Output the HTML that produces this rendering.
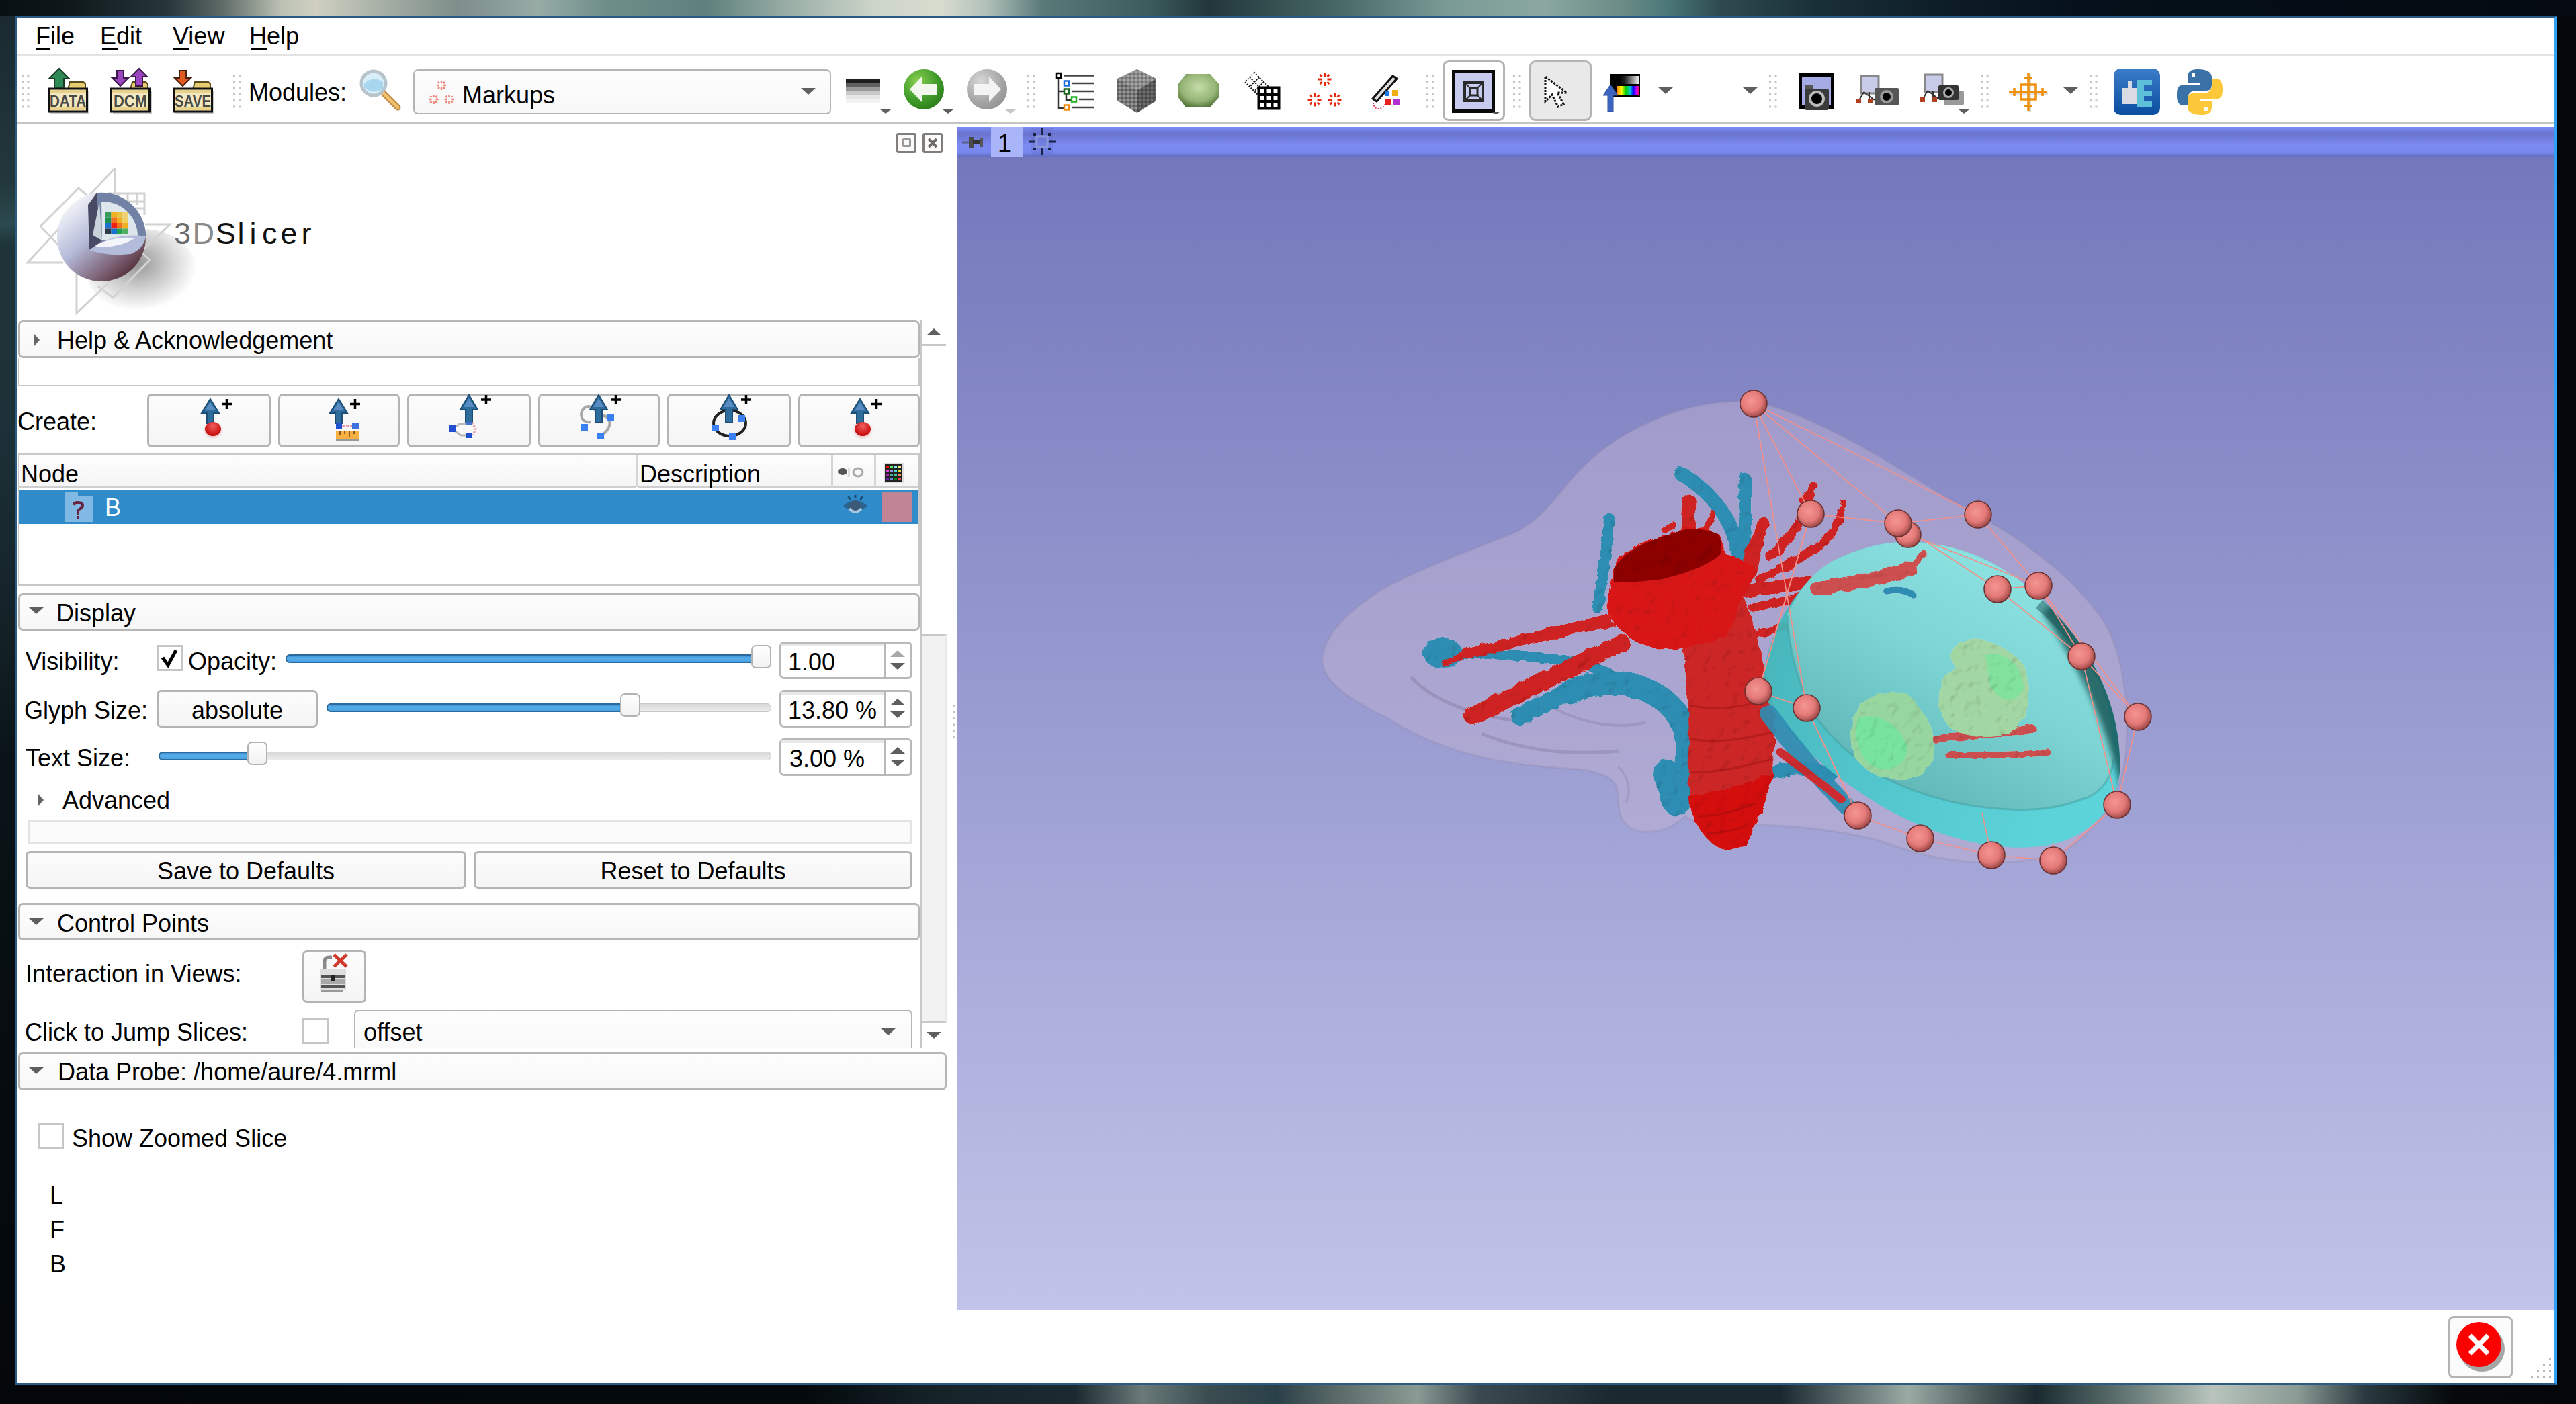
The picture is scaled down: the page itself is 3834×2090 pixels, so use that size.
<!DOCTYPE html>
<html><head><meta charset="utf-8">
<style>
html,body{margin:0;padding:0;width:3834px;height:2090px;overflow:hidden;background:#03070b;}
*{box-sizing:border-box;}
.a{position:absolute;}
.t{position:absolute;font-family:"Liberation Sans",sans-serif;font-size:36px;line-height:36px;white-space:pre;color:#000;}
.box{position:absolute;border:3px solid #b6b6b6;border-radius:7px;background:linear-gradient(#fdfdfd,#f7f7f7);}
.btn{position:absolute;border:3px solid #b4b4b4;border-radius:7px;background:linear-gradient(#fcfcfc,#f5f5f5);}
.grip{position:absolute;width:14px;height:50px;background-image:radial-gradient(circle,#c4c4c4 1.6px,transparent 1.8px);background-size:9.5px 9.5px;}
.tri-r{position:absolute;width:0;height:0;border-top:10px solid transparent;border-bottom:10px solid transparent;border-left:9px solid #666;}
.tri-d{position:absolute;width:0;height:0;border-left:11px solid transparent;border-right:11px solid transparent;border-top:10px solid #5f5f5f;}
.tri-u{position:absolute;width:0;height:0;border-left:11px solid transparent;border-right:11px solid transparent;border-bottom:10px solid #5f5f5f;}
.cb{position:absolute;border:3px solid #c6c6c6;background:#fff;width:39px;height:39px;}
.groove{position:absolute;height:13px;border-radius:6px;background:linear-gradient(#d8d8d8,#ececec);border:1px solid #c8c8c8;}
.fill{position:absolute;height:13px;border-radius:6px;background:linear-gradient(#3f8fcc,#56adea 40%,#4aa2e0);border:2px solid #2a6a9e;}
.handle{position:absolute;width:30px;height:35px;border:2px solid #b3b3b3;border-radius:7px;background:linear-gradient(#ffffff,#f2f2f2);}
.spin{position:absolute;border:3px solid #b8b8b8;border-radius:7px;background:#fff;}
</style></head>
<body>
<!-- desktop background strips -->
<div class="a" style="left:0;top:0;width:3834px;height:24px;background:linear-gradient(90deg,#071012 0px,#0d1618 90px,#26363a 250px,#5e6a66 330px,#bcc2b4 420px,#cfd0c2 470px,#aab2a8 560px,#7e8e8a 680px,#8a9c98 745px,#98aca6 800px,#6e8e8a 900px,#5e807c 1050px,#9cb0a8 1180px,#ccd4c8 1300px,#d8dccf 1400px,#b0c0b8 1470px,#5a7a7a 1550px,#3a5a5c 1715px,#22363c 1800px,#3a5656 1920px,#4a6a6a 2000px,#7a9a96 2150px,#8aa8a0 2300px,#6a8a86 2420px,#4a7878 2480px,#2e4a50 2560px,#1a3038 2700px,#0e1e26 2880px,#05101a 3100px,#040a10 3834px);"></div>
<div class="a" style="left:0;top:2061px;width:3834px;height:29px;background:linear-gradient(90deg,#03070b 0px,#04090d 1200px,#16242a 1400px,#1a2a30 1600px,#6a7a7a 1700px,#3a4c50 1800px,#2a4048 1900px,#5a6a68 1990px,#8a9a94 2110px,#3a4a50 2200px,#1a2830 2400px,#1a2830 2650px,#9aaaa4 2840px,#4a5a5a 2950px,#1a2a30 3030px,#5a6e6c 3150px,#b8c4bc 3293px,#8a9a94 3420px,#2a3a40 3520px,#05090c 3650px,#03070b 3834px);"></div>
<div class="a" style="left:0;top:24px;width:23px;height:2037px;background:linear-gradient(#1a2a30 0px,#22383c 250px,#2c4a4e 310px,#1e3438 340px,#1c3238 600px,#142228 900px,#0a1418 1100px,#060b0f 1600px,#04080b 2037px);"></div>
<!-- window -->
<div class="a" style="left:23px;top:24px;width:3782px;height:2037px;border:3px solid #2b5b84;border-right-color:#2fa0f5;background:#fff;"></div>

<!-- menu -->
<div class="a" style="left:26px;top:80px;width:3775px;height:3px;background:#e4e4e4;"></div>
<div class="t" style="left:53px;top:36px;">File</div>
<div class="a" style="left:53px;top:71px;width:21px;height:3px;background:#000;"></div>
<div class="t" style="left:149px;top:36px;">Edit</div>
<div class="a" style="left:152px;top:71px;width:24px;height:3px;background:#000;"></div>
<div class="t" style="left:257px;top:36px;">View</div>
<div class="a" style="left:257px;top:71px;width:24px;height:3px;background:#000;"></div>
<div class="t" style="left:371px;top:36px;">Help</div>
<div class="a" style="left:374px;top:71px;width:24px;height:3px;background:#000;"></div>

<!-- toolbar -->
<div class="a" style="left:26px;top:182px;width:3775px;height:3px;background:#c4c4c4;"></div>
<div id="toolbar">
<svg class="a" style="left:32px;top:111px" width="12" height="50" fill="#c4c4c4"><rect x="0" y="0.0" width="3" height="3"/><rect x="8.5" y="0.0" width="3" height="3"/><rect x="0" y="9.3" width="3" height="3"/><rect x="8.5" y="9.3" width="3" height="3"/><rect x="0" y="18.6" width="3" height="3"/><rect x="8.5" y="18.6" width="3" height="3"/><rect x="0" y="27.9" width="3" height="3"/><rect x="8.5" y="27.9" width="3" height="3"/><rect x="0" y="37.2" width="3" height="3"/><rect x="8.5" y="37.2" width="3" height="3"/><rect x="0" y="46.5" width="3" height="3"/><rect x="8.5" y="46.5" width="3" height="3"/></svg>
<svg class="a" style="left:347px;top:111px" width="12" height="50" fill="#c4c4c4"><rect x="0" y="0.0" width="3" height="3"/><rect x="8.5" y="0.0" width="3" height="3"/><rect x="0" y="9.3" width="3" height="3"/><rect x="8.5" y="9.3" width="3" height="3"/><rect x="0" y="18.6" width="3" height="3"/><rect x="8.5" y="18.6" width="3" height="3"/><rect x="0" y="27.9" width="3" height="3"/><rect x="8.5" y="27.9" width="3" height="3"/><rect x="0" y="37.2" width="3" height="3"/><rect x="8.5" y="37.2" width="3" height="3"/><rect x="0" y="46.5" width="3" height="3"/><rect x="8.5" y="46.5" width="3" height="3"/></svg>
<svg class="a" style="left:1529px;top:111px" width="12" height="50" fill="#c4c4c4"><rect x="0" y="0.0" width="3" height="3"/><rect x="8.5" y="0.0" width="3" height="3"/><rect x="0" y="9.3" width="3" height="3"/><rect x="8.5" y="9.3" width="3" height="3"/><rect x="0" y="18.6" width="3" height="3"/><rect x="8.5" y="18.6" width="3" height="3"/><rect x="0" y="27.9" width="3" height="3"/><rect x="8.5" y="27.9" width="3" height="3"/><rect x="0" y="37.2" width="3" height="3"/><rect x="8.5" y="37.2" width="3" height="3"/><rect x="0" y="46.5" width="3" height="3"/><rect x="8.5" y="46.5" width="3" height="3"/></svg>
<svg class="a" style="left:2123px;top:111px" width="12" height="50" fill="#c4c4c4"><rect x="0" y="0.0" width="3" height="3"/><rect x="8.5" y="0.0" width="3" height="3"/><rect x="0" y="9.3" width="3" height="3"/><rect x="8.5" y="9.3" width="3" height="3"/><rect x="0" y="18.6" width="3" height="3"/><rect x="8.5" y="18.6" width="3" height="3"/><rect x="0" y="27.9" width="3" height="3"/><rect x="8.5" y="27.9" width="3" height="3"/><rect x="0" y="37.2" width="3" height="3"/><rect x="8.5" y="37.2" width="3" height="3"/><rect x="0" y="46.5" width="3" height="3"/><rect x="8.5" y="46.5" width="3" height="3"/></svg>
<svg class="a" style="left:2252px;top:111px" width="12" height="50" fill="#c4c4c4"><rect x="0" y="0.0" width="3" height="3"/><rect x="8.5" y="0.0" width="3" height="3"/><rect x="0" y="9.3" width="3" height="3"/><rect x="8.5" y="9.3" width="3" height="3"/><rect x="0" y="18.6" width="3" height="3"/><rect x="8.5" y="18.6" width="3" height="3"/><rect x="0" y="27.9" width="3" height="3"/><rect x="8.5" y="27.9" width="3" height="3"/><rect x="0" y="37.2" width="3" height="3"/><rect x="8.5" y="37.2" width="3" height="3"/><rect x="0" y="46.5" width="3" height="3"/><rect x="8.5" y="46.5" width="3" height="3"/></svg>
<svg class="a" style="left:2633px;top:111px" width="12" height="50" fill="#c4c4c4"><rect x="0" y="0.0" width="3" height="3"/><rect x="8.5" y="0.0" width="3" height="3"/><rect x="0" y="9.3" width="3" height="3"/><rect x="8.5" y="9.3" width="3" height="3"/><rect x="0" y="18.6" width="3" height="3"/><rect x="8.5" y="18.6" width="3" height="3"/><rect x="0" y="27.9" width="3" height="3"/><rect x="8.5" y="27.9" width="3" height="3"/><rect x="0" y="37.2" width="3" height="3"/><rect x="8.5" y="37.2" width="3" height="3"/><rect x="0" y="46.5" width="3" height="3"/><rect x="8.5" y="46.5" width="3" height="3"/></svg>
<svg class="a" style="left:2948px;top:111px" width="12" height="50" fill="#c4c4c4"><rect x="0" y="0.0" width="3" height="3"/><rect x="8.5" y="0.0" width="3" height="3"/><rect x="0" y="9.3" width="3" height="3"/><rect x="8.5" y="9.3" width="3" height="3"/><rect x="0" y="18.6" width="3" height="3"/><rect x="8.5" y="18.6" width="3" height="3"/><rect x="0" y="27.9" width="3" height="3"/><rect x="8.5" y="27.9" width="3" height="3"/><rect x="0" y="37.2" width="3" height="3"/><rect x="8.5" y="37.2" width="3" height="3"/><rect x="0" y="46.5" width="3" height="3"/><rect x="8.5" y="46.5" width="3" height="3"/></svg>
<svg class="a" style="left:3110px;top:111px" width="12" height="50" fill="#c4c4c4"><rect x="0" y="0.0" width="3" height="3"/><rect x="8.5" y="0.0" width="3" height="3"/><rect x="0" y="9.3" width="3" height="3"/><rect x="8.5" y="9.3" width="3" height="3"/><rect x="0" y="18.6" width="3" height="3"/><rect x="8.5" y="18.6" width="3" height="3"/><rect x="0" y="27.9" width="3" height="3"/><rect x="8.5" y="27.9" width="3" height="3"/><rect x="0" y="37.2" width="3" height="3"/><rect x="8.5" y="37.2" width="3" height="3"/><rect x="0" y="46.5" width="3" height="3"/><rect x="8.5" y="46.5" width="3" height="3"/></svg>
<!-- DATA -->
<svg class="a" style="left:66px;top:98px" width="80" height="78" viewBox="0 0 80 78">
 <rect x="9" y="37" width="58" height="35" fill="#999" opacity=".5"/>
 <path d="M38 24 h20 l3 3 v8 h-26z" fill="#e8cc70" stroke="#5a4a20" stroke-width="2"/>
 <rect x="6.5" y="34" width="57" height="34" fill="#f3e8c0" stroke="#111" stroke-width="3"/>
 <rect x="8" y="36" width="54" height="4" fill="#e7d08a"/>
 <rect x="8" y="61" width="54" height="5" fill="#e9d28a"/>
 <text x="35" y="61" font-family="Liberation Sans" font-size="24" font-weight="bold" fill="#4a4a44" text-anchor="middle" textLength="54" lengthAdjust="spacingAndGlyphs">DATA</text>
 <path d="M22 4 l15 15 h-8 v13 h-14 v-13 h-8z" fill="#2e8a55" stroke="#1a3a28" stroke-width="2"/>
</svg>
<!-- DCM -->
<svg class="a" style="left:159px;top:98px" width="80" height="78" viewBox="0 0 80 78">
 <rect x="9" y="37" width="58" height="35" fill="#999" opacity=".5"/>
 <path d="M38 24 h20 l3 3 v8 h-26z" fill="#e8cc70" stroke="#5a4a20" stroke-width="2"/>
 <rect x="6.5" y="34" width="57" height="34" fill="#f3e8c0" stroke="#111" stroke-width="3"/>
 <rect x="8" y="36" width="54" height="4" fill="#e7d08a"/>
 <rect x="8" y="61" width="54" height="5" fill="#e9d28a"/>
 <text x="35" y="61" font-family="Liberation Sans" font-size="24" font-weight="bold" fill="#4a4a44" text-anchor="middle" textLength="50" lengthAdjust="spacingAndGlyphs">DCM</text>
 <path d="M15 7 h10 v11 h7 l-12 12 l-12 -12 h7z" fill="#9b45c0" stroke="#3a1a48" stroke-width="2"/>
 <path d="M48 4 l12 12 h-7 v14 h-10 v-14 h-7z" fill="#9b45c0" stroke="#3a1a48" stroke-width="2"/>
</svg>
<!-- SAVE -->
<svg class="a" style="left:252px;top:98px" width="80" height="78" viewBox="0 0 80 78">
 <rect x="9" y="37" width="58" height="35" fill="#999" opacity=".5"/>
 <path d="M38 24 h20 l3 3 v8 h-26z" fill="#e8cc70" stroke="#5a4a20" stroke-width="2"/>
 <rect x="6.5" y="34" width="57" height="34" fill="#f3e8c0" stroke="#111" stroke-width="3"/>
 <rect x="8" y="36" width="54" height="4" fill="#e7d08a"/>
 <rect x="8" y="61" width="54" height="5" fill="#e9d28a"/>
 <text x="35" y="61" font-family="Liberation Sans" font-size="24" font-weight="bold" fill="#4a4a44" text-anchor="middle" textLength="54" lengthAdjust="spacingAndGlyphs">SAVE</text>
 <path d="M15 7 h10 v11 h7 l-12 12 l-12 -12 h7z" fill="#e05a20" stroke="#4a2010" stroke-width="2"/>
</svg>
<div class="t" style="left:370px;top:120px;">Modules:</div>
<!-- magnifier -->
<svg class="a" style="left:534px;top:102px" width="64" height="64" viewBox="0 0 64 64">
 <path d="M36 36 L58 58" stroke="#c08a40" stroke-width="9" stroke-linecap="round"/>
 <path d="M36 36 L58 58" stroke="#f0c070" stroke-width="5" stroke-linecap="round"/>
 <circle cx="22" cy="22" r="18" fill="#d8eef8" stroke="#b8c4cc" stroke-width="5"/>
 <path d="M8 22 Q22 10 36 20 L36 30 Q22 40 8 28z" fill="#a8d6ee"/>
</svg>
<!-- module combo -->
<div class="a" style="left:615px;top:103px;width:622px;height:67px;border:2px solid #b5b5b5;border-radius:7px;background:linear-gradient(#fdfdfd,#f8f8f8);"></div>
<svg class="a" style="left:634px;top:116px" width="48" height="44" viewBox="634 116 48 44"><g stroke="#ec6a5a" stroke-width="2.5" fill="none" opacity=".85"><path d="M657 120v4 M657 130v4 M650 127h4 M660 127h4 M652 122l2 2 M662 122l-2 2 M652 132l2 -2 M662 132l-2 -2"/><path d="M645.5 141v4 M645.5 151v4 M638.5 148h4 M648.5 148h4 M640.5 143l2 2 M650.5 143l-2 2 M640.5 153l2 -2 M650.5 153l-2 -2"/><path d="M668.5 141v4 M668.5 151v4 M661.5 148h4 M671.5 148h4 M663.5 143l2 2 M673.5 143l-2 2 M663.5 153l2 -2 M673.5 153l-2 -2"/></g></svg>
<div class="t" style="left:688px;top:124px;">Markups</div>
<div class="tri-d" style="left:1192px;top:131px;"></div>
<!-- window level -->
<div class="a" style="left:1259px;top:117px;width:51px;height:36px;background:linear-gradient(#1e1e1e 0,#1e1e1e 6px,#606060 6px,#606060 12px,#9a9a9a 12px,#9a9a9a 18px,#c8c8c8 18px,#c8c8c8 24px,#e6e6e6 24px,#e6e6e6 30px,#f3f3f3 30px);"></div>
<div class="a" style="left:1310px;top:163px;width:0;height:0;border-left:8px solid transparent;border-right:8px solid transparent;border-top:6px solid #5f5f5f;"></div>
<!-- back -->
<svg class="a" style="left:1344px;top:100px" width="64" height="66" viewBox="0 0 64 66">
 <defs><radialGradient id="gb" cx=".35" cy=".3" r=".8"><stop offset="0" stop-color="#8ad050"/><stop offset=".6" stop-color="#3f9a2a"/><stop offset="1" stop-color="#2a7a1a"/></radialGradient>
 <radialGradient id="gf" cx=".35" cy=".3" r=".8"><stop offset="0" stop-color="#d8d8d8"/><stop offset=".6" stop-color="#a8a8a8"/><stop offset="1" stop-color="#909090"/></radialGradient></defs>
 <circle cx="31" cy="33" r="30" fill="url(#gb)"/>
 <path d="M10 33 L28 14 V25 H50 V41 H28 V52z" fill="#f2f8ee"/>
</svg>
<div class="a" style="left:1403px;top:163px;width:0;height:0;border-left:8px solid transparent;border-right:8px solid transparent;border-top:6px solid #5f5f5f;"></div>
<svg class="a" style="left:1438px;top:100px" width="64" height="66" viewBox="0 0 64 66">
 <circle cx="31" cy="33" r="30" fill="url(#gf)"/>
 <path d="M52 33 L34 14 V25 H12 V41 H34 V52z" fill="#f4f4f4"/>
</svg>
<div class="a" style="left:1496px;top:163px;width:0;height:0;border-left:8px solid transparent;border-right:8px solid transparent;border-top:6px solid #c8c8c8;"></div>
<!-- tree -->
<svg class="a" style="left:1570px;top:107px" width="60" height="60" viewBox="0 0 60 60">
 <g stroke="#333" stroke-width="2.5" fill="none">
 <path d="M5 9 V54 H13 M5 29 H13 M17 33 V42 H24"/>
 </g>
 <g stroke="#444" stroke-width="2.5"><path d="M13 5.5 H58 M25 17 H58 M25 29 H58 M36 41 H58 M25 53 H58"/></g>
 <rect x="2" y="2" width="7" height="7" fill="#fff" stroke="#000" stroke-width="2.5"/>
 <rect x="14" y="13.5" width="7" height="7" fill="#fff" stroke="#1a6ee0" stroke-width="2.5"/>
 <rect x="14" y="25.5" width="7" height="7" fill="#fff" stroke="#1a6a1a" stroke-width="2.5"/>
 <rect x="25" y="37.5" width="7" height="7" fill="#fff" stroke="#22b022" stroke-width="2.5"/>
 <rect x="14" y="49.5" width="7" height="7" fill="#fff" stroke="#f08a10" stroke-width="2.5"/>
</svg>
<!-- cube -->
<svg class="a" style="left:1659px;top:100px" width="66" height="72" viewBox="0 0 66 72">
 <defs><pattern id="noise" width="6" height="6" patternUnits="userSpaceOnUse"><rect width="6" height="6" fill="#777"/><rect width="3" height="3" fill="#999"/><rect x="3" y="3" width="3" height="3" fill="#5a5a5a"/></pattern></defs>
 <path d="M33 3 L62 17 V50 L33 68 L4 50 V17z" fill="url(#noise)"/>
 <path d="M33 35 L62 17 V50 L33 68z" fill="#222" opacity=".35"/>
 <path d="M33 3 L62 17 L33 35 L4 17z" fill="#fff" opacity=".15"/>
</svg>
<!-- green blob -->
<svg class="a" style="left:1751px;top:106px" width="66" height="58" viewBox="0 0 66 58">
 <defs><radialGradient id="gg" cx=".5" cy=".4" r=".6"><stop offset="0" stop-color="#c6dcaa"/><stop offset=".7" stop-color="#94b474"/><stop offset="1" stop-color="#5a7a40"/></radialGradient></defs>
 <path d="M14 4 H50 L64 20 V38 L50 54 H14 L2 38 V20z" fill="url(#gg)"/>
</svg>
<!-- grid -->
<svg class="a" style="left:1851px;top:106px" width="56" height="58" viewBox="0 0 56 58">
 <g fill="none" stroke="#111" stroke-width="2" stroke-dasharray="2 2">
 <path d="M16 2 L2 16 L28 42 L42 28z M9 9 L35 35 M23 9 L9 23 M30 16 L16 30 M37 23 L23 37"/>
 </g>
 <rect x="22.5" y="24.5" width="30" height="31" fill="#fff" stroke="#000" stroke-width="4"/>
 <path d="M32.5 25v30 M42.5 25v30 M23 35h30 M23 45h30" stroke="#000" stroke-width="4"/>
</svg>
<!-- markups stars -->
<svg class="a" style="left:1940px;top:105px" width="64" height="60" viewBox="1940 105 64 60"><g stroke="#e52a10" stroke-width="3" fill="none"><path d="M1971.5 108v6 M1971.5 122v6 M1961.5 118h6 M1975.5 118h6 M1964.5 111l3 3 M1978.5 111l-3 3 M1964.5 125l3 -3 M1978.5 125l-3 -3"/><path d="M1956.5 138.5v6 M1956.5 152.5v6 M1946.5 148.5h6 M1960.5 148.5h6 M1949.5 141.5l3 3 M1963.5 141.5l-3 3 M1949.5 155.5l3 -3 M1963.5 155.5l-3 -3"/><path d="M1986.5 138.5v6 M1986.5 152.5v6 M1976.5 148.5h6 M1990.5 148.5h6 M1979.5 141.5l3 3 M1993.5 141.5l-3 3 M1979.5 155.5l3 -3 M1993.5 155.5l-3 -3"/></g></svg>
<!-- paint -->
<svg class="a" style="left:2039px;top:109px" width="52" height="56" viewBox="0 0 52 56">
 <path d="M4 38 L34 4 L40 8 L10 42z" fill="#ddd" stroke="#111" stroke-width="3"/>
 <path d="M5 44 Q6 56 18 52 Q22 48 24 44" fill="none" stroke="#e04060" stroke-width="2" stroke-dasharray="2 2"/>
 <rect x="22" y="27" width="7" height="7" fill="#1a78e0"/><rect x="33" y="25" width="9" height="9" fill="#f0b010"/>
 <rect x="23" y="38" width="9" height="9" fill="#e82020"/><rect x="35" y="38" width="9" height="9" fill="#b030d0"/>
</svg>
<!-- layout button -->
<div class="btn" style="left:2147px;top:90px;width:93px;height:90px;border-width:3px;border-radius:9px;background:#fff;"></div>
<svg class="a" style="left:2161px;top:104px" width="76" height="66" viewBox="0 0 76 66">
 <rect x="2.5" y="2.5" width="59" height="59" fill="#c8cbf0" stroke="#0a0a0a" stroke-width="5"/>
 <rect x="19" y="19" width="27" height="27" fill="#c8cbf0" stroke="#2a2a2a" stroke-width="4"/>
 <rect x="27" y="27" width="11" height="11" fill="#c8cbf0" stroke="#2a2a2a" stroke-width="3"/>
 <path d="M21 21l6 6M44 21l-6 6M21 44l6-6M44 44l-6-6" stroke="#2a2a2a" stroke-width="2"/>
 <path d="M60 62 h12 l-8 6z" fill="#555"/>
</svg>
<!-- arrow button -->
<div class="btn" style="left:2276px;top:90px;width:93px;height:90px;border-width:3px;border-radius:9px;background:#e9e9e9;"></div>
<svg class="a" style="left:2297px;top:111px" width="50" height="52" viewBox="0 0 50 52">
 <path d="M3 3 L3 40 L13 30 L22 48 L30 44 L21 27 L35 27z" fill="#fff" stroke="#111" stroke-width="3" stroke-dasharray="3 2"/>
</svg>
<!-- colour -->
<svg class="a" style="left:2385px;top:108px" width="60" height="60" viewBox="0 0 60 60">
 <defs><linearGradient id="gray" x1="0" x2="1"><stop offset="0" stop-color="#000"/><stop offset=".3" stop-color="#222"/><stop offset="1" stop-color="#eee"/></linearGradient>
 <linearGradient id="rainbow" x1="0" x2="1"><stop offset="0" stop-color="#f80"/><stop offset=".2" stop-color="#ff0"/><stop offset=".4" stop-color="#0c0"/><stop offset=".6" stop-color="#0cc"/><stop offset=".75" stop-color="#00f"/><stop offset=".9" stop-color="#c0f"/><stop offset="1" stop-color="#f06"/></linearGradient></defs>
 <rect x="11" y="2" width="45" height="34" fill="#000"/>
 <rect x="25" y="5" width="29" height="12" fill="url(#gray)"/>
 <rect x="22" y="20" width="32" height="13" fill="url(#rainbow)"/>
 <path d="M12 18 L23 34 H16 V58 H8 V34 H1z" fill="#3a64c0" stroke="#2a4a90" stroke-width="1"/>
</svg>
<div class="tri-d" style="left:2468px;top:130px;"></div>
<div class="tri-d" style="left:2594px;top:130px;"></div>
<!-- cameras -->
<svg class="a" style="left:2676px;top:108px" width="56" height="60" viewBox="0 0 56 60">
 <rect x="3.5" y="3.5" width="48" height="48" fill="#a6abe6" stroke="#000" stroke-width="5"/>
 <rect x="10" y="19" width="12" height="7" fill="#555"/>
 <rect x="10" y="24" width="36" height="32" rx="3" fill="#3a3a3a"/>
 <circle cx="28" cy="39" r="12" fill="#bbb"/><circle cx="28" cy="39" r="8" fill="#000"/>
</svg>
<svg class="a" style="left:2760px;top:111px" width="68" height="50" viewBox="0 0 68 50">
 <rect x="10" y="2" width="26" height="26" fill="#c8cce8" stroke="#888" stroke-width="3"/>
 <path d="M14 26 L6 40 M22 26 L22 38 M14 26 L30 38" stroke="#333" stroke-width="2"/>
 <rect x="2" y="36" width="8" height="7" fill="#b04020"/><rect x="20" y="36" width="8" height="7" fill="#b04020"/>
 <rect x="30" y="20" width="36" height="26" rx="2" fill="#555"/>
 <circle cx="48" cy="33" r="10" fill="#999"/><circle cx="48" cy="33" r="6" fill="#000"/>
</svg>
<svg class="a" style="left:2855px;top:109px" width="70" height="50" viewBox="0 0 70 50">
 <rect x="10" y="2" width="26" height="26" fill="#c8cce8" stroke="#888" stroke-width="3"/>
 <path d="M14 26 L6 40 M22 26 L22 38 M14 26 L30 38" stroke="#333" stroke-width="2"/>
 <rect x="2" y="36" width="8" height="7" fill="#b04020"/><rect x="20" y="36" width="8" height="7" fill="#b04020"/>
 <rect x="38" y="26" width="30" height="22" rx="3" fill="#999"/>
 <rect x="30" y="18" width="30" height="22" rx="2" fill="#333"/>
 <circle cx="45" cy="29" r="8" fill="#aaa"/><circle cx="45" cy="29" r="5" fill="#000"/>
</svg>
<div class="a" style="left:2915px;top:163px;width:0;height:0;border-left:8px solid transparent;border-right:8px solid transparent;border-top:6px solid #5f5f5f;"></div>
<!-- crosshair -->
<svg class="a" style="left:2988px;top:106px" width="62" height="62" viewBox="0 0 62 62">
 <g stroke="#000" opacity=".12" stroke-width="4"><path d="M33 4V60M4 33H60"/></g>
 <g stroke="#f0900a" stroke-width="3.5" fill="none">
 <path d="M31 2V59 M2 31H59 M25 10h12 M25 52h12 M10 25v12 M52 25v12"/>
 <rect x="20" y="20" width="22" height="22"/>
 </g>
</svg>
<div class="tri-d" style="left:3071px;top:130px;"></div>
<!-- extensions -->
<svg class="a" style="left:3145px;top:101px" width="72" height="72" viewBox="0 0 72 72">
 <defs><linearGradient id="ext" x1="0" y1="0" x2="0" y2="1"><stop offset="0" stop-color="#3c7cc8"/><stop offset="1" stop-color="#0a4ea0"/></linearGradient></defs>
 <rect x="1" y="1" width="69" height="69" rx="10" fill="url(#ext)"/>
 <path d="M14 30 h8 v-10 h6 v10 h8 v24 h-22z" fill="#d8dce2"/>
 <path d="M36 18 h22 v8 h-12 v8 h12 v8 h-12 v8 h12 v8 h-22z" fill="#5ec0d8"/>
</svg>
<!-- python -->
<svg class="a" style="left:3238px;top:101px" width="72" height="72" viewBox="0 0 72 72">
 <path d="M34 2 C20 2 18 8 18 14 V22 H36 V26 H10 C2 26 2 34 2 42 C2 52 6 56 12 56 H18 V46 C18 38 24 34 30 34 H46 C52 34 54 30 54 24 V14 C54 6 46 2 34 2z" fill="#3a72a8"/>
 <path d="M38 70 C52 70 54 64 54 58 V50 H36 V46 H62 C70 46 70 38 70 30 C70 20 66 16 60 16 H54 V26 C54 34 48 38 42 38 H26 C20 38 18 42 18 48 V58 C18 66 26 70 38 70z" fill="#fcc83a"/>
 <rect x="24" y="8" width="5" height="6" fill="#fff"/><rect x="43" y="58" width="5" height="6" fill="#fff"/>
</svg>
</div>

<!-- left panel -->
<div id="panel">
<!-- undock/close -->
<div class="a" style="left:1334px;top:198px;width:30px;height:30px;border:3px solid #807d7a;border-radius:3px;background:#fbfbfb;"></div>
<div class="a" style="left:1343px;top:206px;width:13px;height:13px;border:3px solid #9a9794;border-radius:2px;"></div>
<div class="a" style="left:1373px;top:198px;width:30px;height:30px;border:3px solid #807d7a;border-radius:3px;background:#fbfbfb;"></div>
<svg class="a" style="left:1373px;top:198px" width="30" height="30"><path d="M9 9 L21 21 M21 9 L9 21" stroke="#6e6b68" stroke-width="4"/></svg>

<!-- logo -->
<svg class="a" style="left:0;top:0" width="500" height="480" viewBox="0 0 500 480">
 <defs>
  <radialGradient id="lshadow" cx=".45" cy=".4" r=".55"><stop offset="0" stop-color="#000" stop-opacity=".42"/><stop offset=".5" stop-color="#000" stop-opacity=".2"/><stop offset="1" stop-color="#000" stop-opacity="0"/></radialGradient>
  <linearGradient id="sph" x1="0.1" y1="0.1" x2="0.9" y2="1"><stop offset="0" stop-color="#fafbfd"/><stop offset=".4" stop-color="#b4bad8"/><stop offset=".72" stop-color="#7e6478"/><stop offset="1" stop-color="#3c1418"/></linearGradient>
 </defs>
 <ellipse cx="212" cy="405" rx="82" ry="64" fill="url(#lshadow)"/>
 <g fill="none" stroke="#d2d2d2" stroke-width="3">
  <path d="M171 250 V289 M171 250 L41 391 H94"/>
  <path d="M114 309 V466 L253 334 H216"/>
  <path d="M60 337 L117 280 L140 300 M60 337 L90 368"/>
  <path d="M146 426 L168 443 L223 387 L205 370"/>
  <path d="M160 288 H215 V320 M176 288 V300 M190 288 V300 M204 288 V305 M176 300 H215 M190 310 H215"/>
 </g>
 <circle cx="151" cy="353" r="66" fill="url(#sph)"/>
 <path d="M144 287 A66 66 0 0 1 217 352 L150 360z" fill="#7282a6"/>
 <path d="M151 300 A52 52 0 0 1 205 352 L152 358z" fill="#dde6ea"/>
 <path d="M133 372 L131 305 L144 287 L150 360z" fill="#474a62"/>
 <path d="M138 350 L148 300 L152 358z" fill="#c9d4da"/>
 <g>
  <rect x="157" y="315" width="8.5" height="8.5" fill="#3a9a5a"/><rect x="165.5" y="315" width="8.5" height="8.5" fill="#f0b020"/><rect x="174" y="315" width="8.5" height="8.5" fill="#e8c040"/><rect x="182.5" y="315" width="8.5" height="8.5" fill="#f0d070"/>
  <rect x="157" y="323.5" width="8.5" height="8.5" fill="#209050"/><rect x="165.5" y="323.5" width="8.5" height="8.5" fill="#f07020"/><rect x="174" y="323.5" width="8.5" height="8.5" fill="#f0b020"/><rect x="182.5" y="323.5" width="8.5" height="8.5" fill="#f0d060"/>
  <rect x="157" y="332" width="8.5" height="8.5" fill="#2070d0"/><rect x="165.5" y="332" width="8.5" height="8.5" fill="#f02010"/><rect x="174" y="332" width="8.5" height="8.5" fill="#f07020"/><rect x="182.5" y="332" width="8.5" height="8.5" fill="#f0b020"/>
  <rect x="157" y="340.5" width="8.5" height="8.5" fill="#303a48"/><rect x="165.5" y="340.5" width="8.5" height="8.5" fill="#1a70d0"/><rect x="174" y="340.5" width="8.5" height="8.5" fill="#20a050"/><rect x="182.5" y="340.5" width="8.5" height="8.5" fill="#50b060"/>
 </g>
 <path d="M133 372 Q170 345 217 352 Q214 370 195 378 Q160 382 133 372z" fill="#b4bcdc"/>
 <path d="M142 365 Q175 350 200 355 Q180 368 145 368z" fill="#fff" opacity=".85"/>
 <text font-family="Liberation Sans" font-size="45" y="363" fill="#111"><tspan x="259" fill="#6c6c6c">3</tspan><tspan x="286.5" fill="#8a8a8a">D</tspan><tspan x="321" fill="#111">S</tspan><tspan x="353.5">l</tspan><tspan x="371.5">i</tspan><tspan x="390">c</tspan><tspan x="417.5">e</tspan><tspan x="448.5">r</tspan></text>
</svg>

<!-- Help & Ack -->
<div class="box" style="left:27px;top:477px;width:1342px;height:56px;"></div>
<div class="tri-r" style="left:50px;top:496px;"></div>
<div class="t" style="left:85px;top:489px;">Help &amp; Acknowledgement</div>
<div class="a" style="left:27px;top:533px;width:1342px;height:42px;border:2px solid #c6c6c6;border-top:none;"></div>

<!-- scrollbar -->
<div class="a" style="left:1370px;top:477px;width:2px;height:1083px;background:#c8c8c8;"></div>
<div class="tri-u" style="left:1379px;top:489px;"></div>
<div class="a" style="left:1370px;top:512px;width:38px;height:3px;background:#c8c8c8;"></div>
<div class="a" style="left:1372px;top:944px;width:37px;height:579px;background:#f2f2f2;border-top:3px solid #c8c8c8;border-bottom:3px solid #c8c8c8;border-right:3px solid #e9e9e9;"></div>
<div class="tri-d" style="left:1379px;top:1536px;"></div>

<!-- Create -->
<div class="t" style="left:26px;top:610px;">Create:</div>
<div class="btn" style="left:219px;top:586px;width:184px;height:80px;"></div>
<div class="btn" style="left:414px;top:586px;width:181px;height:80px;"></div>
<div class="btn" style="left:606px;top:586px;width:184px;height:80px;"></div>
<div class="btn" style="left:801px;top:586px;width:181px;height:80px;"></div>
<div class="btn" style="left:993px;top:586px;width:184px;height:80px;"></div>
<div class="btn" style="left:1188px;top:586px;width:181px;height:80px;"></div>
<svg class="a" style="left:297px;top:592px" width="50" height="40" viewBox="0 0 50 40">
 <path d="M16 2 L29 23 H21 V38 H11 V23 H3z" fill="#2e6c9c" stroke="#1c4f78" stroke-width="2"/>
 <path d="M16 7 L24 19 H8z" fill="#5a8cc4"/>
 <path d="M33 9.5 H48 M40.5 2 V17" stroke="#000" stroke-width="3.5"/>
</svg>
<div class="a" style="left:305px;top:628px;width:24px;height:21px;border-radius:50%;background:radial-gradient(circle at 50% 30%,#f06060,#d01818 60%,#b00a10);box-shadow:0 2px 4px rgba(200,0,0,.25);"></div>
<svg class="a" style="left:488px;top:592px" width="50" height="40" viewBox="0 0 50 40">
 <path d="M16 2 L29 23 H21 V38 H11 V23 H3z" fill="#2e6c9c" stroke="#1c4f78" stroke-width="2"/>
 <path d="M16 7 L24 19 H8z" fill="#5a8cc4"/>
 <path d="M33 9.5 H48 M40.5 2 V17" stroke="#000" stroke-width="3.5"/>
</svg>
<svg class="a" style="left:498px;top:628px" width="40" height="32" viewBox="0 0 40 32">
 <rect x="2" y="2" width="9" height="9" fill="#1e50d0"/><rect x="26" y="2" width="11" height="9" fill="#3a70e0"/>
 <path d="M11 6.5 H26" stroke="#e8a0a8" stroke-width="3" stroke-dasharray="4 2"/>
 <rect x="2" y="14" width="35" height="14" fill="#f8b040"/><rect x="2" y="26" width="35" height="3" fill="#999"/>
 <path d="M8 14v6 M15 14v4 M22 14v8 M29 14v4" stroke="#8a5a20" stroke-width="2"/>
</svg>
<svg class="a" style="left:666px;top:586px" width="70" height="70" viewBox="0 0 70 70">
 <path d="M32 2 L45 24 H37 V43 H27 V24 H19z" fill="#2e6c9c" stroke="#1c4f78" stroke-width="2"/>
 <path d="M32 7 L40 20 H24z" fill="#5a8cc4"/>
 <path d="M50 9 H65 M57.5 2 V16" stroke="#000" stroke-width="3.5"/>
 <path d="M8 52 L18 45 H32" fill="none" stroke="#b8b8b8" stroke-width="3"/>
 <path d="M8 53 L20 62 H32" fill="none" stroke="#b8b8b8" stroke-width="3"/>
 <path d="M36 43 L42 52 L38 62" fill="none" stroke="#e8a0a8" stroke-width="3" stroke-dasharray="3 2"/>
 <rect x="3" y="47" width="9" height="10" fill="#2050d0"/><rect x="27" y="58" width="10" height="8" fill="#2050d0"/><rect x="27" y="42" width="10" height="5" fill="#4070d0"/>
</svg>
<svg class="a" style="left:859px;top:586px" width="70" height="70" viewBox="0 0 70 70">
 <path d="M21 42 C6 44 2 30 10 22 C16 16 24 20 28 26" fill="none" stroke="#a8a8a8" stroke-width="4"/>
 <path d="M34 34 C46 30 52 42 46 52 C42 60 36 62 30 62" fill="none" stroke="#a8a8a8" stroke-width="4"/>
 <path d="M32 2 L45 24 H37 V43 H27 V24 H19z" fill="#2e6c9c" stroke="#1c4f78" stroke-width="2"/>
 <path d="M32 7 L40 20 H24z" fill="#5a8cc4"/>
 <path d="M50 9 H65 M57.5 2 V16" stroke="#000" stroke-width="3.5"/>
 <rect x="6" y="45" width="10" height="10" fill="#3a80f0"/><rect x="45" y="31" width="10" height="10" fill="#3a80f0"/><rect x="30" y="58" width="10" height="10" fill="#3a80f0"/>
</svg>
<svg class="a" style="left:1053px;top:586px" width="70" height="70" viewBox="0 0 70 70">
 <ellipse cx="33" cy="44" rx="24" ry="19" fill="#f4f4f4" stroke="#222" stroke-width="4"/>
 <path d="M32 2 L45 24 H37 V43 H27 V24 H19z" fill="#2e6c9c" stroke="#1c4f78" stroke-width="2"/>
 <path d="M32 7 L40 20 H24z" fill="#5a8cc4"/>
 <path d="M50 9 H65 M57.5 2 V16" stroke="#000" stroke-width="3.5"/>
 <rect x="7" y="46" width="10" height="10" fill="#3a80f0"/><rect x="46" y="32" width="10" height="10" fill="#3a80f0"/><rect x="32" y="59" width="10" height="10" fill="#3a80f0"/>
</svg>
<svg class="a" style="left:1264px;top:592px" width="50" height="40" viewBox="0 0 50 40">
 <path d="M16 2 L29 23 H21 V38 H11 V23 H3z" fill="#2e6c9c" stroke="#1c4f78" stroke-width="2"/>
 <path d="M16 7 L24 19 H8z" fill="#5a8cc4"/>
 <path d="M33 9.5 H48 M40.5 2 V17" stroke="#000" stroke-width="3.5"/>
</svg>
<div class="a" style="left:1272px;top:628px;width:24px;height:21px;border-radius:50%;background:radial-gradient(circle at 50% 30%,#f06060,#d01818 60%,#b00a10);box-shadow:0 2px 4px rgba(200,0,0,.25);"></div>

<!-- table -->
<div class="a" style="left:27px;top:675px;width:1342px;height:197px;border:2px solid #c8c8c8;background:#fff;"></div>
<div class="a" style="left:29px;top:677px;width:1338px;height:49px;background:linear-gradient(#fdfdfd,#f6f6f6);border-bottom:3px solid #cfcfcf;"></div>
<div class="a" style="left:946px;top:677px;width:3px;height:48px;background:#d6d6d6;"></div>
<div class="a" style="left:1237px;top:677px;width:3px;height:48px;background:#d6d6d6;"></div>
<div class="a" style="left:1301px;top:677px;width:3px;height:48px;background:#d6d6d6;"></div>
<div class="t" style="left:31px;top:688px;">Node</div>
<div class="t" style="left:952px;top:688px;">Description</div>
<div class="a" style="left:29px;top:729px;width:1338px;height:51px;background:#2f8bc9;"></div>
<div class="t" style="left:156px;top:738px;color:#fff;">B</div>
<div class="a" style="left:1313px;top:732px;width:45px;height:45px;background:#c08494;"></div>
<svg class="a" style="left:1244px;top:694px" width="46" height="20" viewBox="0 0 46 20">
 <ellipse cx="10" cy="8" rx="7" ry="5" fill="#555"/><rect x="18" y="2" width="3" height="14" fill="#ddd"/>
 <ellipse cx="33" cy="9" rx="7" ry="6" fill="none" stroke="#aaa" stroke-width="3"/>
</svg>
<svg class="a" style="left:1314px;top:688px" width="32" height="32" viewBox="0 0 32 32">
 <rect x="2" y="2" width="28" height="28" fill="#222" stroke="#ddd" stroke-width="2"/>
 <g><rect x="5" y="5" width="4" height="4" fill="#f00"/><rect x="11" y="5" width="4" height="4" fill="#6e6"/><rect x="17" y="5" width="4" height="4" fill="#8ee"/><rect x="23" y="5" width="4" height="4" fill="#ee8"/>
 <rect x="5" y="11" width="4" height="4" fill="#d4d"/><rect x="11" y="11" width="4" height="4" fill="#99d"/><rect x="17" y="11" width="4" height="4" fill="#4dd"/><rect x="23" y="11" width="4" height="4" fill="#dd4"/>
 <rect x="5" y="17" width="4" height="4" fill="#a2a"/><rect x="11" y="17" width="4" height="4" fill="#4aa"/><rect x="17" y="17" width="4" height="4" fill="#4c9"/><rect x="23" y="17" width="4" height="4" fill="#f85"/>
 <rect x="5" y="23" width="4" height="4" fill="#62a"/><rect x="11" y="23" width="4" height="4" fill="#68d"/><rect x="17" y="23" width="4" height="4" fill="#080"/><rect x="23" y="23" width="4" height="4" fill="#e46"/></g>
</svg>
<svg class="a" style="left:94px;top:731px" width="48" height="48" viewBox="0 0 48 48">
 <path d="M3 1 H22 V7 H45 V46 H3z" fill="#9cc8ec" opacity=".75"/>
 <path d="M14 20 Q14 15 22 15 Q31 15 31 21 Q31 27 24 29 V35 H20 V27 Q26 25 26 21 Q26 19 22 19 Q18 19 18 22z M20 37 H24 V41 H20z" fill="#6a2440"/>
</svg>
<svg class="a" style="left:1252px;top:737px" width="42" height="32" viewBox="0 0 42 32">
 <path d="M3 16 Q21 0 39 16 Q21 32 3 16z" fill="#2a5a80" opacity=".8"/>
 <circle cx="21" cy="17" r="9" fill="#3a5a78"/><path d="M12 20 Q21 30 30 20" stroke="#a8c8e0" stroke-width="4" fill="none"/>
 <path d="M13 7 L11 2 M21 5 V0 M29 7 L31 2" stroke="#1a4a70" stroke-width="3"/>
</svg>
<div class="a" style="left:946px;top:725px;width:3px;height:3px;background:#fff;"></div>


<!-- Display -->
<div class="box" style="left:27px;top:883px;width:1342px;height:56px;"></div>
<div class="tri-d" style="left:43px;top:904px;"></div>
<div class="t" style="left:84px;top:895px;">Display</div>

<div class="t" style="left:38px;top:967px;">Visibility:</div>
<div class="cb" style="left:233px;top:960px;"></div>
<svg class="a" style="left:233px;top:960px" width="39" height="39"><path d="M9 19 L17 30 L29 8" fill="none" stroke="#000" stroke-width="5"/></svg>
<div class="t" style="left:280px;top:967px;">Opacity:</div>
<div class="fill" style="left:425px;top:974px;width:700px;"></div>
<div class="handle" style="left:1118px;top:960px;"></div>
<div class="spin" style="left:1160px;top:955px;width:198px;height:56px;"></div>
<div class="a" style="left:1315px;top:958px;width:3px;height:50px;background:#b9b9b9;"></div>
<div class="a" style="left:1163px;top:958px;width:152px;height:4px;background:#e8e8e8;"></div>
<div class="tri-u" style="left:1325px;top:968px;border-bottom-color:#a8a8a8;"></div>
<div class="tri-d" style="left:1325px;top:987px;"></div>
<div class="t" style="left:1173px;top:968px;">1.00</div>

<div class="t" style="left:36px;top:1040px;">Glyph Size:</div>
<div class="btn" style="left:233px;top:1027px;width:240px;height:56px;"></div>
<div class="t" style="left:233px;top:1040px;width:240px;text-align:center;">absolute</div>
<div class="groove" style="left:486px;top:1047px;width:662px;"></div>
<div class="fill" style="left:486px;top:1047px;width:445px;"></div>
<div class="handle" style="left:923px;top:1032px;"></div>
<div class="spin" style="left:1160px;top:1027px;width:198px;height:56px;"></div>
<div class="a" style="left:1315px;top:1030px;width:3px;height:50px;background:#b9b9b9;"></div>
<div class="a" style="left:1163px;top:1030px;width:152px;height:4px;background:#e8e8e8;"></div>
<div class="tri-u" style="left:1325px;top:1040px;"></div>
<div class="tri-d" style="left:1325px;top:1059px;"></div>
<div class="t" style="left:1173px;top:1040px;">13.80 %</div>

<div class="t" style="left:38px;top:1111px;">Text Size:</div>
<div class="groove" style="left:236px;top:1119px;width:912px;"></div>
<div class="fill" style="left:236px;top:1119px;width:140px;"></div>
<div class="handle" style="left:368px;top:1104px;"></div>
<div class="spin" style="left:1160px;top:1099px;width:198px;height:56px;"></div>
<div class="a" style="left:1315px;top:1102px;width:3px;height:50px;background:#b9b9b9;"></div>
<div class="a" style="left:1163px;top:1102px;width:152px;height:4px;background:#e8e8e8;"></div>
<div class="tri-u" style="left:1325px;top:1112px;"></div>
<div class="tri-d" style="left:1325px;top:1131px;"></div>
<div class="t" style="left:1175px;top:1112px;">3.00 %</div>

<div class="tri-r" style="left:56px;top:1181px;"></div>
<div class="t" style="left:93px;top:1174px;">Advanced</div>
<div class="a" style="left:41px;top:1221px;width:1317px;height:36px;border:3px solid #e3e3e3;background:#fbfbfb;"></div>
<div class="btn" style="left:38px;top:1267px;width:656px;height:56px;"></div>
<div class="t" style="left:38px;top:1279px;width:656px;text-align:center;">Save to Defaults</div>
<div class="btn" style="left:705px;top:1267px;width:653px;height:56px;"></div>
<div class="t" style="left:705px;top:1279px;width:653px;text-align:center;">Reset to Defaults</div>

<!-- Control Points -->
<div class="box" style="left:27px;top:1344px;width:1342px;height:56px;"></div>
<div class="tri-d" style="left:43px;top:1367px;"></div>
<div class="t" style="left:85px;top:1357px;">Control Points</div>
<div class="t" style="left:38px;top:1432px;">Interaction in Views:</div>
<div class="btn" style="left:450px;top:1414px;width:95px;height:79px;"></div>
<svg class="a" style="left:474px;top:1417px" width="48" height="60" viewBox="0 0 48 60">
 <path d="M9 27 V14 Q9 8 16 8 H20" fill="none" stroke="#8a8a8a" stroke-width="5"/>
 <rect x="2" y="26" width="39" height="31" fill="#dedede"/>
 <rect x="4" y="35" width="35" height="4" fill="#555"/><rect x="4" y="50" width="35" height="4" fill="#555"/>
 <rect x="4" y="41" width="35" height="7" fill="#a8a8a8"/><rect x="4" y="56" width="33" height="3" fill="#999"/>
 <rect x="19" y="34" width="6" height="10" fill="#222"/>
 <path d="M23 4 L42 22 M42 4 L23 22" stroke="#d03a2a" stroke-width="5"/>
</svg>
<div class="t" style="left:37px;top:1519px;">Click to Jump Slices:</div>
<div class="cb" style="left:450px;top:1515px;"></div>
<div class="a" style="left:527px;top:1503px;width:831px;height:57px;overflow:hidden;">
  <div class="a" style="left:0;top:0;width:831px;height:80px;border:2px solid #b5b5b5;border-radius:7px;background:linear-gradient(#fdfdfd,#f8f8f8);"></div>
</div>
<div class="t" style="left:541px;top:1519px;">offset</div>
<div class="tri-d" style="left:1311px;top:1531px;"></div>

<!-- Data probe -->
<div class="box" style="left:27px;top:1566px;width:1382px;height:57px;"></div>
<div class="tri-d" style="left:43px;top:1589px;"></div>
<div class="t" style="left:86px;top:1578px;">Data Probe: /home/aure/4.mrml</div>
<div class="cb" style="left:56px;top:1671px;"></div>
<div class="t" style="left:107px;top:1677px;">Show Zoomed Slice</div>
<div class="t" style="left:74px;top:1762px;">L</div>
<div class="t" style="left:74px;top:1813px;">F</div>
<div class="t" style="left:74px;top:1864px;">B</div>
</div>

<!-- 3D view -->
<div class="a" style="left:1424px;top:189px;width:2378px;height:45px;background:linear-gradient(#7c8af6 0px,#6a74cd 10px,#7c8bf3 28px,#7888ee 38px,#6270c4 43px,#6270c4 45px);"></div>
<div class="a" style="left:1424px;top:234px;width:2378px;height:1716px;background:linear-gradient(#7477bb,#c1c3e8);"></div>
<svg class="a" style="left:1424px;top:234px" width="2378" height="1716" viewBox="1424 234 2378 1716">
 <defs>
  <linearGradient id="rimg" x1="0" y1="0" x2="1" y2="0.3"><stop offset="0" stop-color="#3cb4b6"/><stop offset=".5" stop-color="#4cc8cc"/><stop offset="1" stop-color="#56d6da"/></linearGradient>
  <linearGradient id="ellg" x1="0.75" y1="0.1" x2="0.2" y2="0.9"><stop offset="0" stop-color="#8ee2e2"/><stop offset=".45" stop-color="#7cd4d4"/><stop offset="1" stop-color="#5eb4b4"/></linearGradient>
  <radialGradient id="sphg" cx=".42" cy=".4" r=".62"><stop offset="0" stop-color="#f49594"/><stop offset=".6" stop-color="#e47a78"/><stop offset="1" stop-color="#9a4646"/></radialGradient>
  <clipPath id="ellclip"><path d="M2622 1029 C2625 960 2660 880 2728 835 C2780 808 2830 802 2880 810 C2960 822 3030 870 3090 950 C3135 1010 3158 1080 3155 1150 C3150 1205 3110 1245 3050 1258 C2970 1272 2880 1245 2800 1200 C2720 1150 2660 1100 2622 1029z"/></clipPath>
  <filter id="soft" x="-20%" y="-20%" width="140%" height="140%"><feGaussianBlur stdDeviation="4"/></filter>
  <filter id="rough" x="-10%" y="-10%" width="120%" height="120%"><feTurbulence type="fractalNoise" baseFrequency="0.07" numOctaves="2" seed="3"/><feDisplacementMap in="SourceGraphic" scale="7"/></filter>
  <filter id="rough2" x="-10%" y="-10%" width="120%" height="120%"><feTurbulence type="fractalNoise" baseFrequency="0.09" numOctaves="2" seed="7"/><feDisplacementMap in="SourceGraphic" scale="6"/></filter>
  <filter id="bump" x="-5%" y="-5%" width="110%" height="110%"><feTurbulence type="fractalNoise" baseFrequency="0.06" numOctaves="2" seed="11" result="n"/><feColorMatrix in="n" type="matrix" values="0 0 0 0 0  0 0 0 0 0  0 0 0 0 0  0 0 0 -1.2 0.75" result="sh"/><feComposite in="sh" in2="SourceGraphic" operator="in" result="shin"/><feMerge><feMergeNode in="SourceGraphic"/><feMergeNode in="shin"/></feMerge></filter>
  <filter id="tex" x="1424" y="234" width="2378" height="1716" filterUnits="userSpaceOnUse">
   <feTurbulence type="fractalNoise" baseFrequency="0.055" numOctaves="2" seed="5" result="noise"/>
   <feDiffuseLighting in="noise" lighting-color="#ffffff" surfaceScale="2.5" result="light"><feDistantLight azimuth="225" elevation="55"/></feDiffuseLighting>
   <feComponentTransfer in="light" result="light2"><feFuncR type="linear" slope="1.35" intercept="-0.05"/><feFuncG type="linear" slope="1.35" intercept="-0.05"/><feFuncB type="linear" slope="1.35" intercept="-0.05"/></feComponentTransfer>
   <feComposite in="light2" in2="SourceAlpha" operator="in" result="lightIn"/>
   <feBlend in="SourceGraphic" in2="lightIn" mode="multiply" result="b"/>
   <feComposite in="b" in2="SourceAlpha" operator="in"/>
  </filter>
 </defs>
 <!-- liver -->
 <path d="M1968 980 C1972 948 1998 915 2056 878 C2110 848 2180 822 2250 795 C2282 780 2300 760 2325 730 C2352 695 2390 660 2441 635 C2490 610 2550 594 2612 598 C2700 618 2800 680 2910 749 C3000 795 3080 850 3132 926 C3160 975 3170 1050 3164 1120 C3160 1180 3120 1240 3070 1268 C3000 1292 2900 1292 2796 1251 C2720 1232 2650 1228 2600 1228 C2560 1230 2520 1225 2508 1215 C2490 1232 2470 1240 2442 1238 C2415 1232 2408 1215 2408 1180 C2405 1160 2390 1150 2350 1145 C2230 1140 2140 1118 2064 1068 C2005 1040 1966 1012 1968 980z" fill="#c4b4d2" fill-opacity=".45" stroke="#9088b0" stroke-opacity=".3" stroke-width="3"/>
 <path d="M2100 1008 C2140 1050 2210 1070 2280 1075" fill="none" stroke="#6a6080" stroke-opacity=".28" stroke-width="5"/>
 <path d="M2205 1092 C2260 1115 2330 1125 2410 1118" fill="none" stroke="#6a6080" stroke-opacity=".25" stroke-width="5"/>
 <path d="M2280 1030 C2320 1070 2400 1090 2450 1075" fill="none" stroke="#6a6080" stroke-opacity=".2" stroke-width="4"/>
 <path d="M2408 1142 C2420 1150 2430 1175 2420 1195" fill="none" stroke="#6a6080" stroke-opacity=".2" stroke-width="3"/>
 <g filter="url(#tex)">
 <!-- blue vessels -->
 <g fill="none" stroke="#2e8db2" stroke-linecap="round" filter="url(#rough2)">
  <path d="M2262 1066 L2335 1030" stroke-width="28"/>
  <path d="M2335 1030 C2370 1016 2410 1012 2445 1025 C2485 1040 2508 1070 2512 1105 C2514 1140 2505 1170 2490 1192" stroke-width="36"/>
  <path d="M2480 1150 L2495 1195" stroke-width="40"/>
  <path d="M2150 975 C2200 970 2270 975 2340 985 C2375 992 2400 1005 2415 1015" stroke-width="16"/>
  <path d="M2502 705 C2530 722 2558 748 2574 780 C2584 802 2588 822 2590 845" stroke-width="22"/>
  <path d="M2597 714 C2598 760 2598 795 2595 830" stroke-width="20"/>
  <path d="M2395 772 C2392 820 2385 860 2378 905" stroke-width="17"/>
  <path d="M2640 1150 C2665 1142 2695 1140 2725 1155" stroke-width="20"/>
 </g>
 <ellipse cx="2147" cy="972" rx="30" ry="23" fill="#2e8db2" filter="url(#rough2)"/>
 <!-- red vessels -->
 <g fill="none" stroke="#cf2424" stroke-linecap="round" filter="url(#rough)">
  <path d="M2413 957 L2192 1066" stroke-width="27"/>
  <path d="M2390 923 C2320 940 2250 958 2185 972" stroke-width="17"/>
  <path d="M2185 972 L2150 988" stroke-width="9"/>
  <path d="M2400 930 L2248 951" stroke-width="9"/>
  <path d="M2514 745 L2512 790" stroke-width="20"/>
  <path d="M2624 777 C2618 800 2612 825 2607 852" stroke-width="17"/>
  <path d="M2694 735 C2690 760 2670 800 2634 829" stroke-width="14"/>
  <path d="M2682 745 L2700 722" stroke-width="10"/>
  <path d="M2741 762 C2735 790 2720 815 2619 862" stroke-width="13"/>
  <path d="M2738 770 L2744 748" stroke-width="9"/>
  <path d="M2600 880 C2660 870 2700 868 2760 860" stroke-width="20"/>
  <path d="M2610 905 C2650 895 2690 885 2730 880" stroke-width="14"/>
  <path d="M2600 950 C2630 940 2660 930 2700 925" stroke-width="12"/>
  <path d="M2590 860 C2600 830 2610 800 2618 790" stroke-width="12"/>
  <path d="M2549 764 L2540 787" stroke-width="8"/>
  <path d="M2478 788 L2490 782" stroke-width="12"/>
 </g>
 <path d="M2500 930 C2508 990 2516 1071 2513 1120 C2512 1160 2513 1200 2527 1228 C2535 1245 2550 1262 2567 1266 C2585 1266 2600 1262 2605 1240 C2608 1215 2625 1190 2636 1156 C2645 1110 2645 1048 2630 1005 C2618 960 2605 900 2590 880 C2560 890 2520 905 2500 930z" fill="#cc2828" filter="url(#rough)"/>
 <path d="M2513 1185 C2560 1180 2600 1165 2640 1150 C2630 1190 2615 1220 2600 1259 C2580 1268 2560 1268 2544 1250 C2527 1235 2513 1210 2513 1185z" fill="#d40c0c" filter="url(#rough)"/>
 <g stroke="#9a1010" stroke-opacity=".45" stroke-width="3" fill="none">
  <path d="M2515 1050 C2560 1060 2600 1050 2638 1040"/><path d="M2515 1100 C2560 1108 2600 1098 2640 1090"/><path d="M2515 1150 C2560 1150 2600 1140 2638 1130"/>
  <path d="M2525 1215 C2560 1215 2590 1205 2615 1195"/><path d="M2540 1240 C2570 1240 2595 1232 2605 1225"/>
 </g>
 <path d="M2392 899 C2395 870 2400 849 2410 829 C2425 815 2450 805 2512 785 C2535 785 2550 790 2559 795 C2565 805 2566 815 2569 824 C2590 832 2612 840 2612 849 C2612 860 2605 870 2590 894 C2580 920 2582 932 2570 945 C2550 955 2520 965 2474 967 C2445 962 2430 955 2420 944 C2400 930 2392 915 2392 899z" fill="#d81414" filter="url(#rough)"/>
 <path d="M2402 846 C2420 820 2440 808 2512 787 C2535 787 2555 792 2559 797 C2563 810 2563 818 2560 826 C2540 842 2515 852 2474 862 C2450 865 2425 868 2402 866z" fill="#8c0606"/>
 </g>
 <!-- cyan ellipsoid -->
 <path d="M2622 1029 C2625 960 2660 880 2728 835 C2780 808 2830 802 2880 810 C2960 822 3030 870 3090 950 C3135 1010 3158 1080 3155 1150 C3150 1205 3110 1245 3050 1258 C2970 1272 2880 1245 2800 1200 C2720 1150 2660 1100 2622 1029z" fill="url(#rimg)" fill-opacity=".93"/>
 <path d="M2660 915 C2680 870 2705 848 2728 835 C2780 808 2830 802 2880 810 C2960 822 3030 870 3090 950 C3125 1000 3145 1060 3146 1130 C3142 1165 3120 1185 3098 1190 C3060 1205 3020 1207 2990 1205 C2920 1202 2860 1185 2805 1158 C2750 1125 2705 1080 2688 1040 C2672 1000 2662 960 2660 915z" fill="url(#ellg)"/>
 <path d="M2660 915 C2662 960 2672 1000 2688 1040 C2705 1080 2750 1125 2805 1158 C2860 1185 2920 1202 2990 1205 C3020 1207 3060 1205 3098 1190 C3120 1185 3142 1165 3146 1130" fill="none" stroke="#3e9a9c" stroke-opacity=".45" stroke-width="3"/>
 <g clip-path="url(#ellclip)"><path d="M3060 893 C3110 945 3160 1020 3170 1100 C3174 1130 3173 1160 3160 1190 C3140 1090 3100 1000 3040 912z" fill="#0e4646" opacity=".75" filter="url(#soft)"/></g>
 <path d="M3040 893 C3080 930 3110 975 3130 1020 C3100 980 3070 940 3030 905z" fill="#1a5a5a" opacity=".5"/>
 <g fill="none" stroke-linecap="round" opacity=".92">
  <path d="M2632 1062 C2660 1100 2700 1150 2748 1200" stroke="#2e8db2" stroke-width="26" filter="url(#rough2)"/>
  <path d="M2650 1120 C2690 1150 2715 1170 2740 1190" stroke="#cf2424" stroke-width="12" filter="url(#rough)"/>
 </g>
 <g filter="url(#tex)">
 <!-- red inside ellipsoid -->
 <g fill="none" stroke="#cf2020" stroke-linecap="round" filter="url(#rough)" opacity=".95">
  <path d="M2705 876 C2760 868 2800 862 2842 846" stroke-width="22"/>
  <path d="M2842 846 L2862 824" stroke-width="12"/>
  <path d="M2880 1100 C2940 1095 2990 1090 3025 1085" stroke-width="12"/>
  <path d="M2900 1124 C2960 1124 3010 1124 3048 1120" stroke-width="10"/>
 </g>
 <path d="M2808 880 C2825 876 2840 880 2848 886" stroke="#2e8db2" stroke-width="10" stroke-linecap="round" fill="none"/>
 <!-- green blobs -->
 <g filter="url(#rough)">
  <path d="M2913 958 C2930 950 2945 951 2954 953 C2970 958 2982 963 2991 971 C3005 980 3012 988 3013 993 C3020 1010 3021 1025 3019 1036 C3018 1050 3017 1060 3013 1069 C3005 1082 2997 1090 2986 1093 C2970 1098 2950 1098 2937 1096 C2920 1092 2906 1088 2899 1080 C2890 1068 2886 1058 2886 1047 C2885 1035 2886 1025 2891 1015 C2896 1005 2903 1000 2910 993 C2904 985 2901 975 2905 971 C2907 965 2910 960 2913 958z" fill="#a2d6a2"/>
  <path d="M2786 1036 C2800 1031 2820 1029 2834 1031 C2842 1035 2848 1040 2851 1047 C2860 1058 2868 1068 2872 1080 C2877 1095 2879 1108 2878 1118 C2876 1132 2870 1143 2862 1150 C2852 1158 2840 1162 2829 1161 C2812 1160 2798 1157 2786 1150 C2773 1142 2763 1134 2759 1123 C2754 1108 2753 1092 2756 1080 C2758 1068 2761 1060 2767 1053 C2772 1045 2778 1040 2786 1036z" fill="#98d6a0"/>
 </g>
 <path d="M2765 1070 C2790 1058 2825 1075 2838 1110 C2840 1140 2815 1150 2790 1142 C2768 1130 2758 1100 2765 1070z" fill="#6ae89a" opacity=".7"/>
 <path d="M2955 975 C2985 968 3010 990 3012 1025 C3000 1050 2975 1046 2962 1020z" fill="#6ae89a" opacity=".6"/>
 </g>
 <!-- lines -->
 <g stroke="#f4908a" stroke-width="1.7" fill="none">
  <path d="M2610 601 L2695 765 L2825 779 L2944 766 L3034 872 L3182 1067 L3151 1198 L3056 1281 L2964 1273 L2858 1248 L2765 1214 L2689 1054 L2617 1029 L2695 765"/>
  <path d="M2610 601 L2825 779 M2610 601 L2944 766 M2610 601 L2689 1054 M2695 765 L2617 1029 M2825 779 L2973 877 L3098 977 L3182 1067 M3034 872 L3098 977 M2973 877 L3034 872 M2689 1054 L2765 1214 M2840 795 L3034 872 M3098 977 L3151 1198 M2964 1273 L2950 1210 M3056 1281 L3056 1255"/>
 </g>
 <!-- spheres -->
 <g fill="url(#sphg)" stroke="#6a3030" stroke-width="1.5">
  <circle cx="2840" cy="796" r="19"/>
  <circle cx="2610" cy="601" r="20"/><circle cx="2695" cy="765" r="20"/><circle cx="2825" cy="779" r="20"/><circle cx="2944" cy="766" r="20"/>
  <circle cx="2973" cy="877" r="20"/><circle cx="3034" cy="872" r="20"/><circle cx="3098" cy="977" r="20"/><circle cx="3182" cy="1067" r="20"/><circle cx="3151" cy="1198" r="20"/>
  <circle cx="3056" cy="1281" r="20"/><circle cx="2964" cy="1273" r="20"/><circle cx="2858" cy="1248" r="20"/><circle cx="2765" cy="1214" r="20"/><circle cx="2689" cy="1054" r="20"/><circle cx="2617" cy="1029" r="20"/>
 </g>
</svg>
<!-- view header controls -->
<svg class="a" style="left:1430px;top:200px" width="40" height="24" viewBox="0 0 40 24"><path d="M2 12 H20" stroke="#444" stroke-width="3" opacity=".6"/><rect x="12" y="4" width="8" height="16" fill="#4a4a4a"/><rect x="18" y="9" width="14" height="6" fill="#333"/><rect x="28" y="5" width="5" height="14" fill="#555"/></svg>
<div class="a" style="left:1475px;top:189px;width:48px;height:45px;background:#aab4f8;"></div>
<div class="t" style="left:1485px;top:196px;">1</div>
<svg class="a" style="left:1530px;top:190px" width="42" height="42" viewBox="0 0 42 42">
 <rect x="5" y="1" width="32" height="40" fill="#6070c8" opacity=".35"/>
 <path d="M21 1V11 M21 31V41 M1 21H11 M31 21H41" stroke="#1a2248" stroke-width="3"/>
 <rect x="13" y="13" width="16" height="16" fill="none" stroke="#8a96d8" stroke-width="3"/>
 <rect x="8" y="8" width="4" height="4" fill="#1a2248"/><rect x="30" y="8" width="4" height="4" fill="#1a2248"/><rect x="8" y="30" width="4" height="4" fill="#1a2248"/><rect x="30" y="30" width="4" height="4" fill="#1a2248"/>
</svg>

<!-- bottom -->
<div class="btn" style="left:3644px;top:1959px;width:96px;height:93px;border-width:3px;border-radius:8px;background:#fbfbfb;"></div>
<div class="a" style="left:3660px;top:1974px;width:68px;height:68px;border-radius:50%;background:#8a8a8a;opacity:.75;"></div>
<div class="a" style="left:3656px;top:1968px;width:67px;height:67px;border-radius:50%;background:#fe0000;"></div>
<svg class="a" style="left:3656px;top:1968px" width="67" height="67" viewBox="0 0 67 67"><path d="M20 20 L47 47 M47 20 L20 47" stroke="#fff" stroke-width="7"/></svg>
<svg class="a" style="left:3766px;top:2021px" width="34" height="34" fill="#b8b8b8">
 <rect x="28" y="1" width="3" height="3"/><rect x="19" y="10" width="3" height="3"/><rect x="28" y="10" width="3" height="3"/>
 <rect x="10" y="19" width="3" height="3"/><rect x="19" y="19" width="3" height="3"/><rect x="28" y="19" width="3" height="3"/>
 <rect x="1" y="28" width="3" height="3"/><rect x="10" y="28" width="3" height="3"/><rect x="19" y="28" width="3" height="3"/><rect x="28" y="28" width="3" height="3"/>
</svg>
<svg class="a" style="left:1418px;top:1049px" width="4" height="50" fill="#c4c4c4">
 <rect x="0" y="0" width="3" height="3"/><rect x="0" y="9.5" width="3" height="3"/><rect x="0" y="19" width="3" height="3"/><rect x="0" y="28.5" width="3" height="3"/><rect x="0" y="38" width="3" height="3"/><rect x="0" y="47" width="3" height="3"/>
</svg>
</body></html>
